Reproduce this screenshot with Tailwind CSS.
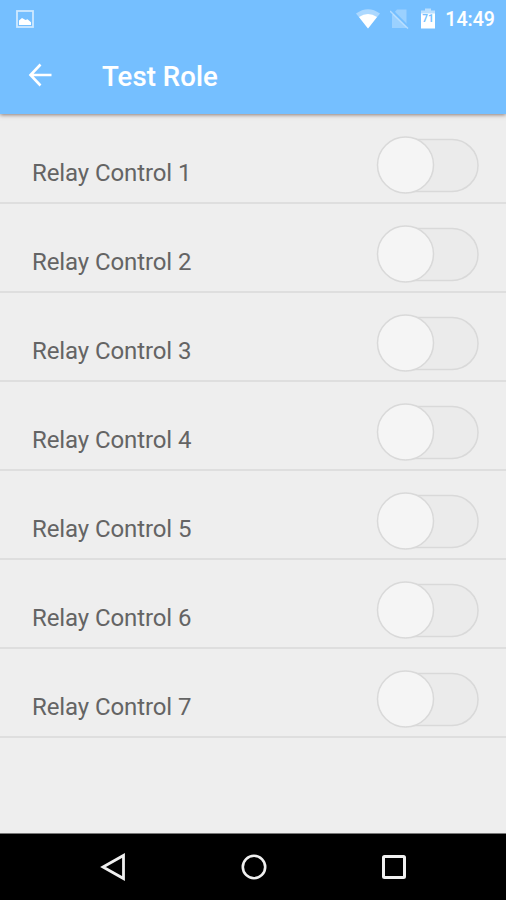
<!DOCTYPE html>
<html lang="en">
<head>
<meta charset="utf-8">
<meta name="viewport" content="width=device-width, initial-scale=1">
<title>Test Role</title>
<script src="https://cdn.jsdelivr.net/npm/@tailwindcss/browser@4"></script>
</head>
<body class="flex h-[900px] w-[506px] flex-col overflow-hidden bg-[#eeeeee] font-[Roboto,sans-serif]">
<header class="relative mb-px h-[114px] shrink-0 bg-[#75bfff] text-white shadow-[0_1px_4px_rgba(60,30,20,0.55)]">
  <div class="flex h-[37px] items-center pr-[11px] pl-[16px]">
    <svg class="h-[18px] w-[18px]" viewBox="0 0 18 18"><rect x="1" y="1" width="16" height="16" fill="none" stroke="white" stroke-width="1.8" opacity=".65"/><path d="M3 15v-4.500l3-2.500 3.500 2 2-.8 3.500 3V15z" fill="white"/></svg>
    <svg class="ml-auto h-[20px] w-[24px]" viewBox="0 0 24 20"><path d="M0 4.500Q12-4 24 4.500L12 19.500z" fill="white" opacity=".4"/><path d="M3 8Q12 2 21 8L12 19.500z" fill="white"/></svg>
    <svg class="ml-[10px] h-[20px] w-[19px]" viewBox="0 0 19 20"><path d="M7 .5h9.500v18.500H2V6z" fill="white" opacity=".28"/><path d="M1 1l17 17" stroke="#75bfff" stroke-width="3"/><path d="M0 2l18 17.500" stroke="white" stroke-width="1.500" opacity=".45"/></svg>
    <svg class="ml-[12px] h-[21px] w-[14px]" viewBox="0 0 14 21"><path d="M4 .5h6v2h4v4H0v-4h4z" fill="white" opacity=".5"/><path d="M0 5.500h14V20.500H0z" fill="white"/><text x="7" y="13.500" text-anchor="middle" font-family="Roboto" font-size="10" font-weight="700" fill="#75bfff">71</text></svg>
    <span class="mt-[2px] ml-[10px] text-[19.500px] leading-none font-medium tracking-[0.05px] [-webkit-text-stroke:0.1px_white]">14:49</span>
  </div>
  <div class="flex h-[77px] items-center pl-[28px]">
    <svg class="-mt-px h-[24px] w-[24px]" viewBox="0 0 24 24"><path d="M23.500 12H3M12.500 1.500L2.500 12l10 10.500" fill="none" stroke="white" stroke-width="2.600"/></svg>
    <h1 class="mt-[2px] ml-[50px] text-[27.500px] leading-none font-medium tracking-[0.1px] [-webkit-text-stroke:0.1px_white]">Test Role</h1>
  </div>
</header>
<main id="list" class="flex-1"></main>
<nav class="flex h-[67px] shrink-0 items-center justify-between border-t border-[#777777] bg-black pr-[99px] pl-[100px]">
  <svg class="h-[28px] w-[26px]" viewBox="0 0 26 28"><path d="M23.500 2.500v23L3 14z" fill="none" stroke="#f0f0f0" stroke-width="2.800"/></svg>
  <svg class="h-[26px] w-[26px]" viewBox="0 0 26 26"><circle cx="13" cy="13" r="11.200" fill="none" stroke="#f0f0f0" stroke-width="2.600"/></svg>
  <svg class="h-[26px] w-[26px]" viewBox="0 0 26 26"><rect x="2.500" y="2.500" width="21" height="21" rx="1" fill="none" stroke="#f0f0f0" stroke-width="3"/></svg>
</nav>
<template id="row">
  <div class="flex h-[89px] items-start justify-between border-b-2 border-[#dedede] pr-[27px] pl-[32px]">
    <span class="mt-[46px] text-[24px] leading-[24px] tracking-[-0.1px] text-[#646464]"></span>
    <svg class="mt-[21px] h-[58px] w-[103px]" viewBox="0 0 103 58"><rect x="3" y="3.500" width="99" height="52" rx="26" fill="#ebebeb" stroke="#d9d9d9" stroke-width="1.500"/><circle cx="29.500" cy="29" r="28" fill="#f5f5f5" stroke="#d9d9d9" stroke-width="1.500"/></svg>
  </div>
</template>
<script>
const row = document.getElementById('row');
for (let i = 1; i <= 7; i++) {
  const item = row.content.cloneNode(true);
  item.querySelector('span').textContent = 'Relay Control ' + i;
  document.getElementById('list').append(item);
}
</script>
</body>
</html>
